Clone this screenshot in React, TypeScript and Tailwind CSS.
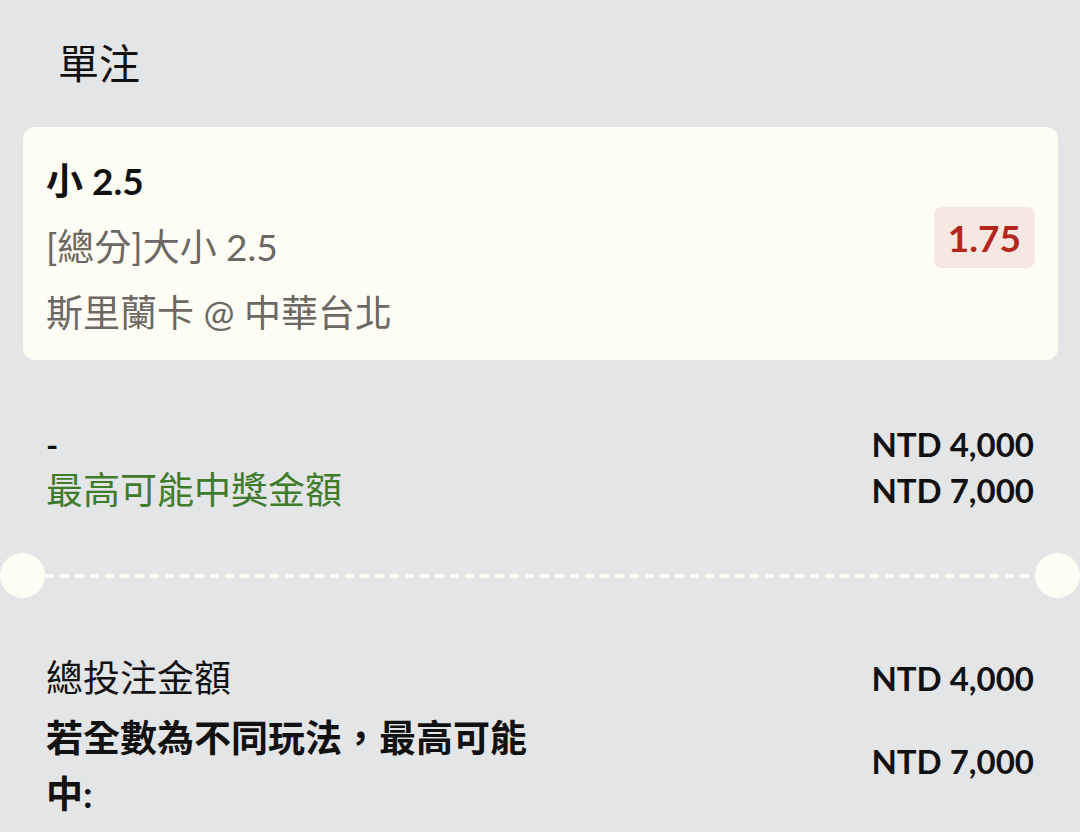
export default function App() {
  return (
    <div className="min-h-[832px] w-[1080px] bg-[#e4e5e7] font-['Lato','Noto_Sans_CJK_TC',sans-serif] text-[#111]">
      <div className="pl-[58px] pt-[36px] text-[41px] leading-[56px]">單注</div>

      {/* bet card */}
      <div className="ml-[23px] mr-[22px] mt-[35px] flex items-center justify-between rounded-xl bg-[#fefdf5] pb-[14px] pl-[23px] pr-[23px] pt-[21px]">
        <div className="text-[37px] leading-[66px]">
          <div className="font-bold">小 2.5</div>
          <div className="text-[#6c6863]">[總分]大小 2.5</div>
          <div className="text-[#6c6863]">斯里蘭卡 @ 中華台北</div>
        </div>
        <div className="mb-[19px] flex h-[61px] items-center rounded-lg bg-[#f6e7e1] px-[14px] text-[37px] font-bold text-[#b3261e]">
          1.75
        </div>
      </div>

      {/* stake / max win */}
      <div className="mt-[61px] flex justify-between px-[46px] leading-[46px]">
        <div>
          <div className="text-[33px] font-bold">-</div>
          <div className="text-[37px] text-[#3e7b2b]">最高可能中獎金額</div>
        </div>
        <div className="text-right text-[33px] font-bold">
          <div>NTD 4,000</div>
          <div>NTD 7,000</div>
        </div>
      </div>

      {/* ticket cut */}
      <div className="mt-[40px] flex items-center">
        <div className="h-[45px] w-[45px] rounded-full bg-[#fefdf5]" />
        <div className="h-[4px] flex-1 bg-[repeating-linear-gradient(90deg,#fefdf5_0_9px,transparent_9px_15px)]" />
        <div className="h-[45px] w-[45px] rounded-full bg-[#fefdf5]" />
      </div>

      {/* totals */}
      <div className="mt-[52px] flex flex-col gap-[4px] px-[46px]">
        <div className="flex items-center justify-between leading-[56px]">
          <div className="text-[37px]">總投注金額</div>
          <div className="text-[33px] font-bold">NTD 4,000</div>
        </div>
        <div className="flex items-center justify-between leading-[56px]">
          <div className="max-w-[500px] text-[37px] font-bold">若全數為不同玩法，最高可能中:</div>
          <div className="mb-[10px] text-[33px] font-bold">NTD 7,000</div>
        </div>
      </div>
    </div>
  )
}
